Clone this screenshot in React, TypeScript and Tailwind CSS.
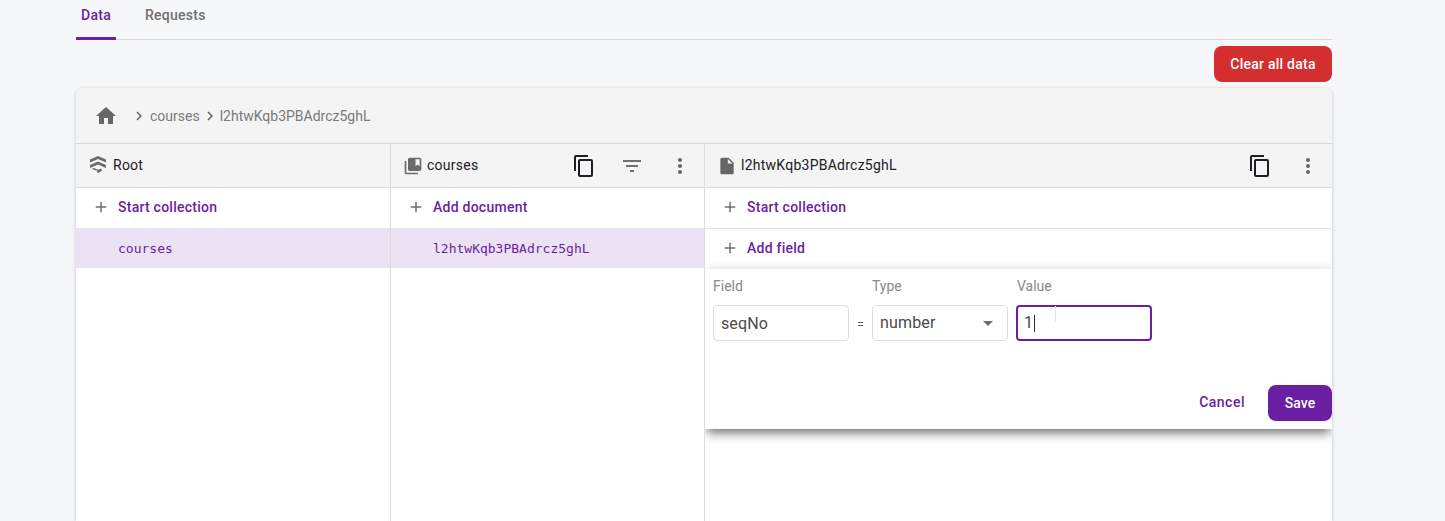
import React from 'react';

const HOME = 'M10 20v-6h4v6h5v-8h3L12 3 2 12h3v8z';
const COPY = 'M16 1H4c-1.1 0-2 .9-2 2v14h2V3h12V1zm3 4H8c-1.1 0-2 .9-2 2v14c0 1.1.9 2 2 2h11c1.1 0 2-.9 2-2V7c0-1.1-.9-2-2-2zm0 16H8V7h11v14z';
const FILTER = 'M10 18h4v-2h-4v2zM3 6v2h18V6H3zm3 7h12v-2H6v2z';
const MORE = 'M12 8c1.1 0 2-.9 2-2s-.9-2-2-2-2 .9-2 2 .9 2 2 2zm0 2c-1.1 0-2 .9-2 2s.9 2 2 2 2-.9 2-2-.9-2-2-2zm0 6c-1.1 0-2 .9-2 2s.9 2 2 2 2-.9 2-2-.9-2-2-2z';
const COLLECTION = 'M4 6H2v14c0 1.1.9 2 2 2h14v-2H4V6zm16-4H8c-1.1 0-2 .9-2 2v12c0 1.1.9 2 2 2h12c1.1 0 2-.9 2-2V4c0-1.1-.9-2-2-2zm0 10l-2.5-1.5L15 12V4h5v8z';
const DOC = 'M6 2c-1.1 0-1.99.9-1.99 2L4 20c0 1.1.89 2 1.99 2H18c1.1 0 2-.9 2-2V8l-6-6H6zm7 7V3.5L18.5 9H13z';
const CHEVRON = 'M8.6 16.6 13.2 12 8.6 7.4 10 6l6 6-6 6z';
const PLUS = 'M19 13h-6v6h-2v-6H5v-2h6V5h2v6h6v2z';

const Icon: React.FC<{ d: string; size?: number; className?: string }> = ({ d, size = 24, className = '' }) => (
  <svg width={size} height={size} viewBox="0 0 24 24" fill="currentColor" className={`shrink-0 ${className}`}>
    <path d={d} />
  </svg>
);

const RootIcon = () => (
  <svg width="20" height="20" viewBox="0 0 20 20" fill="#6b6b6b" className="shrink-0 -translate-y-[1px]">
    <path d="M10 1 18 4.5V7.5L10 4 2 7.5V4.5z" />
    <path d="M10 6.5 18 10v3L10 9.5 2 13v-3z" />
    <path d="M3.5 14 6 13l4 1.8 3-1.3 1.2 2.2L10 18l-1.5-1.2L10 16z" />
  </svg>
);

const AddRow: React.FC<{ label: string; border?: boolean }> = ({ label, border }) => (
  <div className={`flex items-center pl-4 pb-[2px] ${border ? 'border-b border-[#e0e0e0] h-[41px]' : 'h-10'}`}>
    <Icon d={PLUS} size={18} className="text-[#6f6f6f]" />
    <span className="ml-2 text-sm font-medium tracking-[0.25px] text-[#6a1fa3]">{label}</span>
  </div>
);

const SelectedRow: React.FC<{ label: string }> = ({ label }) => (
  <div className="flex items-center h-10 pl-[42px] pt-[2px] bg-[#ebe2f3]">
    <span className="text-[13px] text-[#6a1fa3] font-['DejaVu_Sans_Mono',monospace]">{label}</span>
  </div>
);

const ColumnHeader: React.FC<{ children: React.ReactNode }> = ({ children }) => (
  <div className="flex items-center h-11 bg-[#f4f4f4] border-b border-[#d9d9d9]">{children}</div>
);

const HeaderTitle: React.FC<{ children: React.ReactNode }> = ({ children }) => (
  <span className="pb-[2px] text-sm tracking-[0.25px] text-[#202124]">{children}</span>
);

export default function App() {
  return (
    <div className="h-[521px] overflow-hidden bg-[#f6f7f9] font-['Roboto',sans-serif]">
      <div className="ml-[76px] w-[1256px] flex flex-col h-full">
        <div className="flex h-10 border-b border-[#d8d8dd] text-sm font-medium tracking-[0.25px]">
          <div className="w-10 h-10 flex justify-center pt-[5px] border-b-[3px] border-[#6a1fa3] text-[#6a1fa3]">Data</div>
          <div className="ml-[29px] pt-[5px] text-[#707070]">Requests</div>
        </div>

        <div className="flex justify-end mt-[6px]">
          <button className="w-[118px] h-9 rounded-lg bg-[#d32f2f] text-white text-sm font-medium tracking-[0.25px]">Clear all data</button>
        </div>

        <div className="mt-[6px] flex-1 flex flex-col rounded-t-lg bg-white shadow-[0_1px_4px_rgba(0,0,0,0.2)]">
          <div className="flex items-center h-14 bg-[#f4f4f4] border-b border-[#d9d9d9] rounded-t-lg pl-[18px] text-sm text-[#7a7a7a]">
            <Icon d={HOME} size={24} className="text-[#666666]" />
            <Icon d={CHEVRON} size={18} className="ml-3 -mr-[1px] text-[#666666]" />
            <span className="ml-[3px]">courses</span>
            <Icon d={CHEVRON} size={18} className="ml-[1px] text-[#666666]" />
            <span className="ml-[1px]">l2htwKqb3PBAdrcz5ghL</span>
          </div>

          <div className="flex flex-1">
            <div className="w-[315px] border-r border-[#dcdcdc]">
              <ColumnHeader>
                <div className="pl-[12px] flex items-center gap-[5px]">
                  <RootIcon />
                  <HeaderTitle>Root</HeaderTitle>
                </div>
              </ColumnHeader>
              <AddRow label="Start collection" />
              <SelectedRow label="courses" />
            </div>

            <div className="w-[314px] border-r border-[#dcdcdc]">
              <ColumnHeader>
                <Icon d={COLLECTION} size={20} className="ml-[12px] mr-1 text-[#6b6b6b]" />
                <HeaderTitle>courses</HeaderTitle>
                <Icon d={COPY} size={24} className="ml-auto text-[#1d1d26]" />
                <Icon d={FILTER} size={24} className="ml-6 text-[#6f6f6f]" />
                <Icon d={MORE} size={24} className="ml-6 mr-3 text-[#666666]" />
              </ColumnHeader>
              <AddRow label="Add document" />
              <SelectedRow label="l2htwKqb3PBAdrcz5ghL" />
            </div>

            <div className="flex-1 overflow-hidden">
              <ColumnHeader>
                <Icon d={DOC} size={20} className="ml-[12px] mr-1 text-[#666666]" />
                <HeaderTitle>l2htwKqb3PBAdrcz5ghL</HeaderTitle>
                <Icon d={COPY} size={24} className="ml-auto text-[#1d1d26]" />
                <Icon d={MORE} size={24} className="ml-6 mr-3 text-[#666666]" />
              </ColumnHeader>
              <AddRow label="Start collection" border />
              <AddRow label="Add field" />

              <div className="relative h-40 bg-white shadow-[0_6px_10px_-2px_rgba(0,0,0,0.55),0_-2px_8px_rgba(0,0,0,0.08)] pl-2">
                <div className="flex pt-[9px] text-sm text-[#8a8a8a] leading-4">
                  <span className="w-[159px]">Field</span>
                  <span className="w-[144px]">Type</span>
                  <span className="ml-[1px]">Value</span>
                </div>
                <div className="flex items-center mt-[11px] text-base text-[#4a4a4a]">
                  <input readOnly value="seqNo" className="w-[136px] h-9 pl-[7px] pr-2 rounded border border-[#dedede] outline-none tracking-[0.1px]" />
                  <span className="w-[23px] text-center text-xs text-[#555555] pt-1">=</span>
                  <div className="w-[136px] h-9 pl-[7px] pr-3 rounded border border-[#dedede] flex items-center justify-between tracking-[0.15px]">
                    <span>number</span>
                    <span className="w-0 h-0 border-x-[5px] border-x-transparent border-t-[5px] border-t-[#6b6b6b] mr-[2px]"></span>
                  </div>
                  <div className="relative ml-2 w-[136px] h-9 px-[6px] rounded border-2 border-[#6a1fa3] flex items-center">
                    <span>1</span>
                    <span className="w-px h-[17px] bg-[#333333] ml-[1px]"></span>
                    <span className="absolute left-[37px] -top-[1px] w-px h-4 bg-[#e4e4e4]"></span>
                  </div>
                </div>
                <div className="flex justify-end items-center mt-[44px]">
                  <span className="pb-[2px] text-sm font-medium tracking-[0.5px] text-[#6a1fa3]">Cancel</span>
                  <button className="ml-[23px] w-16 h-9 rounded-lg bg-[#6a1fa3] text-white text-sm font-medium">Save</button>
                </div>
              </div>
            </div>
          </div>
        </div>
      </div>
    </div>
  );
}
